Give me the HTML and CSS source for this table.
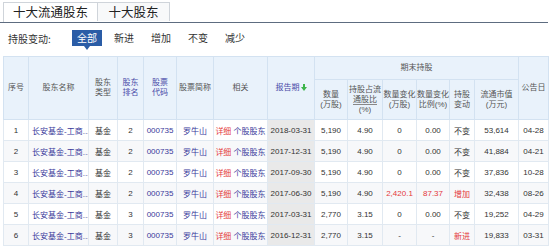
FILE: index.html
```html
<!DOCTYPE html>
<html lang="zh-CN">
<head>
    <meta charset="UTF-8">
    <title>十大流通股东</title>
    <link rel="stylesheet" href="styles.css">
</head>
<body>
    <div class="tabs">
        <div class="tab active">十大流通股东</div>
        <div class="tab">十大股东</div>
    </div>

    <div class="filter">
        <span class="filter-label">持股变动:</span>
        <span class="filter-item active">全部</span>
        <span class="filter-item">新进</span>
        <span class="filter-item">增加</span>
        <span class="filter-item">不变</span>
        <span class="filter-item">减少</span>
    </div>

    <table class="holders">
        <colgroup>
            <col style="width:25px"><col style="width:60px"><col style="width:29px"><col style="width:26px">
            <col style="width:33px"><col style="width:37px"><col style="width:54px"><col style="width:47px">
            <col style="width:33px"><col style="width:35px"><col style="width:34px"><col style="width:33px">
            <col style="width:25px"><col style="width:44px"><col style="width:30px">
        </colgroup>
        <thead>
            <tr class="head-top">
                <th rowspan="2">序号</th>
                <th rowspan="2">股东名称</th>
                <th rowspan="2">股东<br>类型</th>
                <th rowspan="2" class="sort">股东<br>排名</th>
                <th rowspan="2" class="sort">股票<br>代码</th>
                <th rowspan="2">股票简称</th>
                <th rowspan="2">相关</th>
                <th rowspan="2" class="sort">报告期<svg class="arrow" width="6" height="7" viewBox="0 0 6 7"><path d="M2 0h2v3h2L3 7 0 3h2z" fill="#3cb44b"/></svg></th>
                <th colspan="6">期末持股</th>
                <th rowspan="2">公告日</th>
            </tr>
            <tr class="head-sub">
                <th>数量<br>(万股)</th>
                <th>持股占流<br><span class="tip">通股比</span><br>(%)</th>
                <th>数量变化<br>(万股)</th>
                <th>数量变化<br>比例(%)</th>
                <th>持股<br>变动</th>
                <th>流通市值<br>(万元)</th>
            </tr>
        </thead>
        <tbody id="rows">
        </tbody>
    </table>

    <script>
        const rows = [
            [1, 2, '2018-03-31', '5,190', '4.90', '0', '0.00', '不变', '53,614', '04-28'],
            [2, 2, '2017-12-31', '5,190', '4.90', '0', '0.00', '不变', '41,884', '04-21'],
            [3, 2, '2017-09-30', '5,190', '4.90', '0', '0.00', '不变', '37,836', '10-28'],
            [4, 2, '2017-06-30', '5,190', '4.90', '2,420.1', '87.37', '增加', '32,438', '08-26'],
            [5, 3, '2017-03-31', '2,770', '3.15', '0', '0.00', '不变', '19,252', '04-29'],
            [6, 3, '2016-12-31', '2,770', '3.15', '-', '-', '新进', '19,833', '03-31']
        ];

        const tbody = document.getElementById('rows');
        rows.forEach(r => {
            const up = r[7] === '增加';
            const hot = r[7] !== '不变';
            const tr = document.createElement('tr');
            tr.innerHTML = `
                <td>${r[0]}</td>
                <td class="name"><a>长安基金-工商...</a></td>
                <td>基金</td>
                <td>${r[1]}</td>
                <td><a>000735</a></td>
                <td><a>罗牛山</a></td>
                <td><a class="red">详细</a> <a>个股股东</a></td>
                <td class="period">${r[2]}</td>
                <td>${r[3]}</td>
                <td>${r[4]}</td>
                <td class="${up ? 'red' : ''}">${r[5]}</td>
                <td class="${up ? 'red' : ''}">${r[6]}</td>
                <td class="${hot ? 'red' : ''}">${r[7]}</td>
                <td>${r[8]}</td>
                <td>${r[9]}</td>
            `;
            tbody.appendChild(tr);
        });
    </script>
</body>
</html>
```

FILE: styles.css
```css
body {
    margin: 0;
    background: #fff;
    color: #333;
    font-family: "Liberation Sans", "Noto Sans CJK SC", sans-serif;
}
.tabs {
    display: flex;
    height: 20px;
    margin: 0 2px 0 0;
    padding: 2px 0 0 3px;
    border-bottom: 1px solid #5d6c80;
}
.tab {
    box-sizing: border-box;
    height: 19px;
    margin-bottom: -1px;
    border: 1px solid #cfd4da;
    border-bottom: none;
    background: #f8f9fa;
    font-family: "Noto Sans CJK SC", sans-serif;
    font-size: 12.5px;
    line-height: 18px;
    color: #222;
    text-align: center;
    white-space: nowrap;
}
.tab.active {
    width: 94px;
    height: 20px;
    background: #fff;
    border-right: none;
}
.tab + .tab {
    width: 73px;
}
.filter {
    display: flex;
    align-items: center;
    height: 16px;
    padding: 7px 0 0 8px;
    margin-bottom: 10px;
    font-family: "Noto Sans CJK SC", sans-serif;
    font-size: 10px;
    color: #333;
}
.filter-label {
    width: 64px;
}
.filter-item {
    position: relative;
    width: 30px;
    margin-right: 7px;
    height: 16px;
    line-height: 16px;
    text-align: center;
}
.filter-item.active {
    background: #2a5ca6;
    color: #fff;
}
.filter-item.active::after {
    content: "";
    position: absolute;
    left: 12px;
    top: 16px;
    border-left: 3px solid transparent;
    border-right: 3px solid transparent;
    border-top: 4px solid #2a5ca6;
}
.holders {
    margin-left: 3px;
    width: 545px;
    table-layout: fixed;
    border-collapse: collapse;
    font-size: 8px;
}
.holders th {
    background: #e9f2fb;
    border: 1px solid #d3e2f1;
    color: #555;
    font-weight: normal;
    line-height: 10px;
    padding: 0;
}
.holders th.sort {
    color: #4a4aa8;
}
.head-top {
    height: 23px;
}
.head-sub {
    height: 40px;
}
.tip {
    border-bottom: 1px solid #888;
}
.arrow {
    margin-left: 1px;
    vertical-align: -1px;
}
.holders td {
    height: 20px;
    padding: 0;
    border: 1px solid #e1e9f1;
    text-align: center;
    white-space: nowrap;
    overflow: hidden;
}
.holders tbody tr:nth-child(even) td {
    background: #f7f8fa;
}
.holders td.name {
    text-align: left;
    padding-left: 3px;
}
.holders td.period,
.holders tbody tr:nth-child(even) td.period {
    background: #e9e9e9;
}
.holders a {
    color: #39399a;
}
.holders .red {
    color: #e4393c;
}
```
